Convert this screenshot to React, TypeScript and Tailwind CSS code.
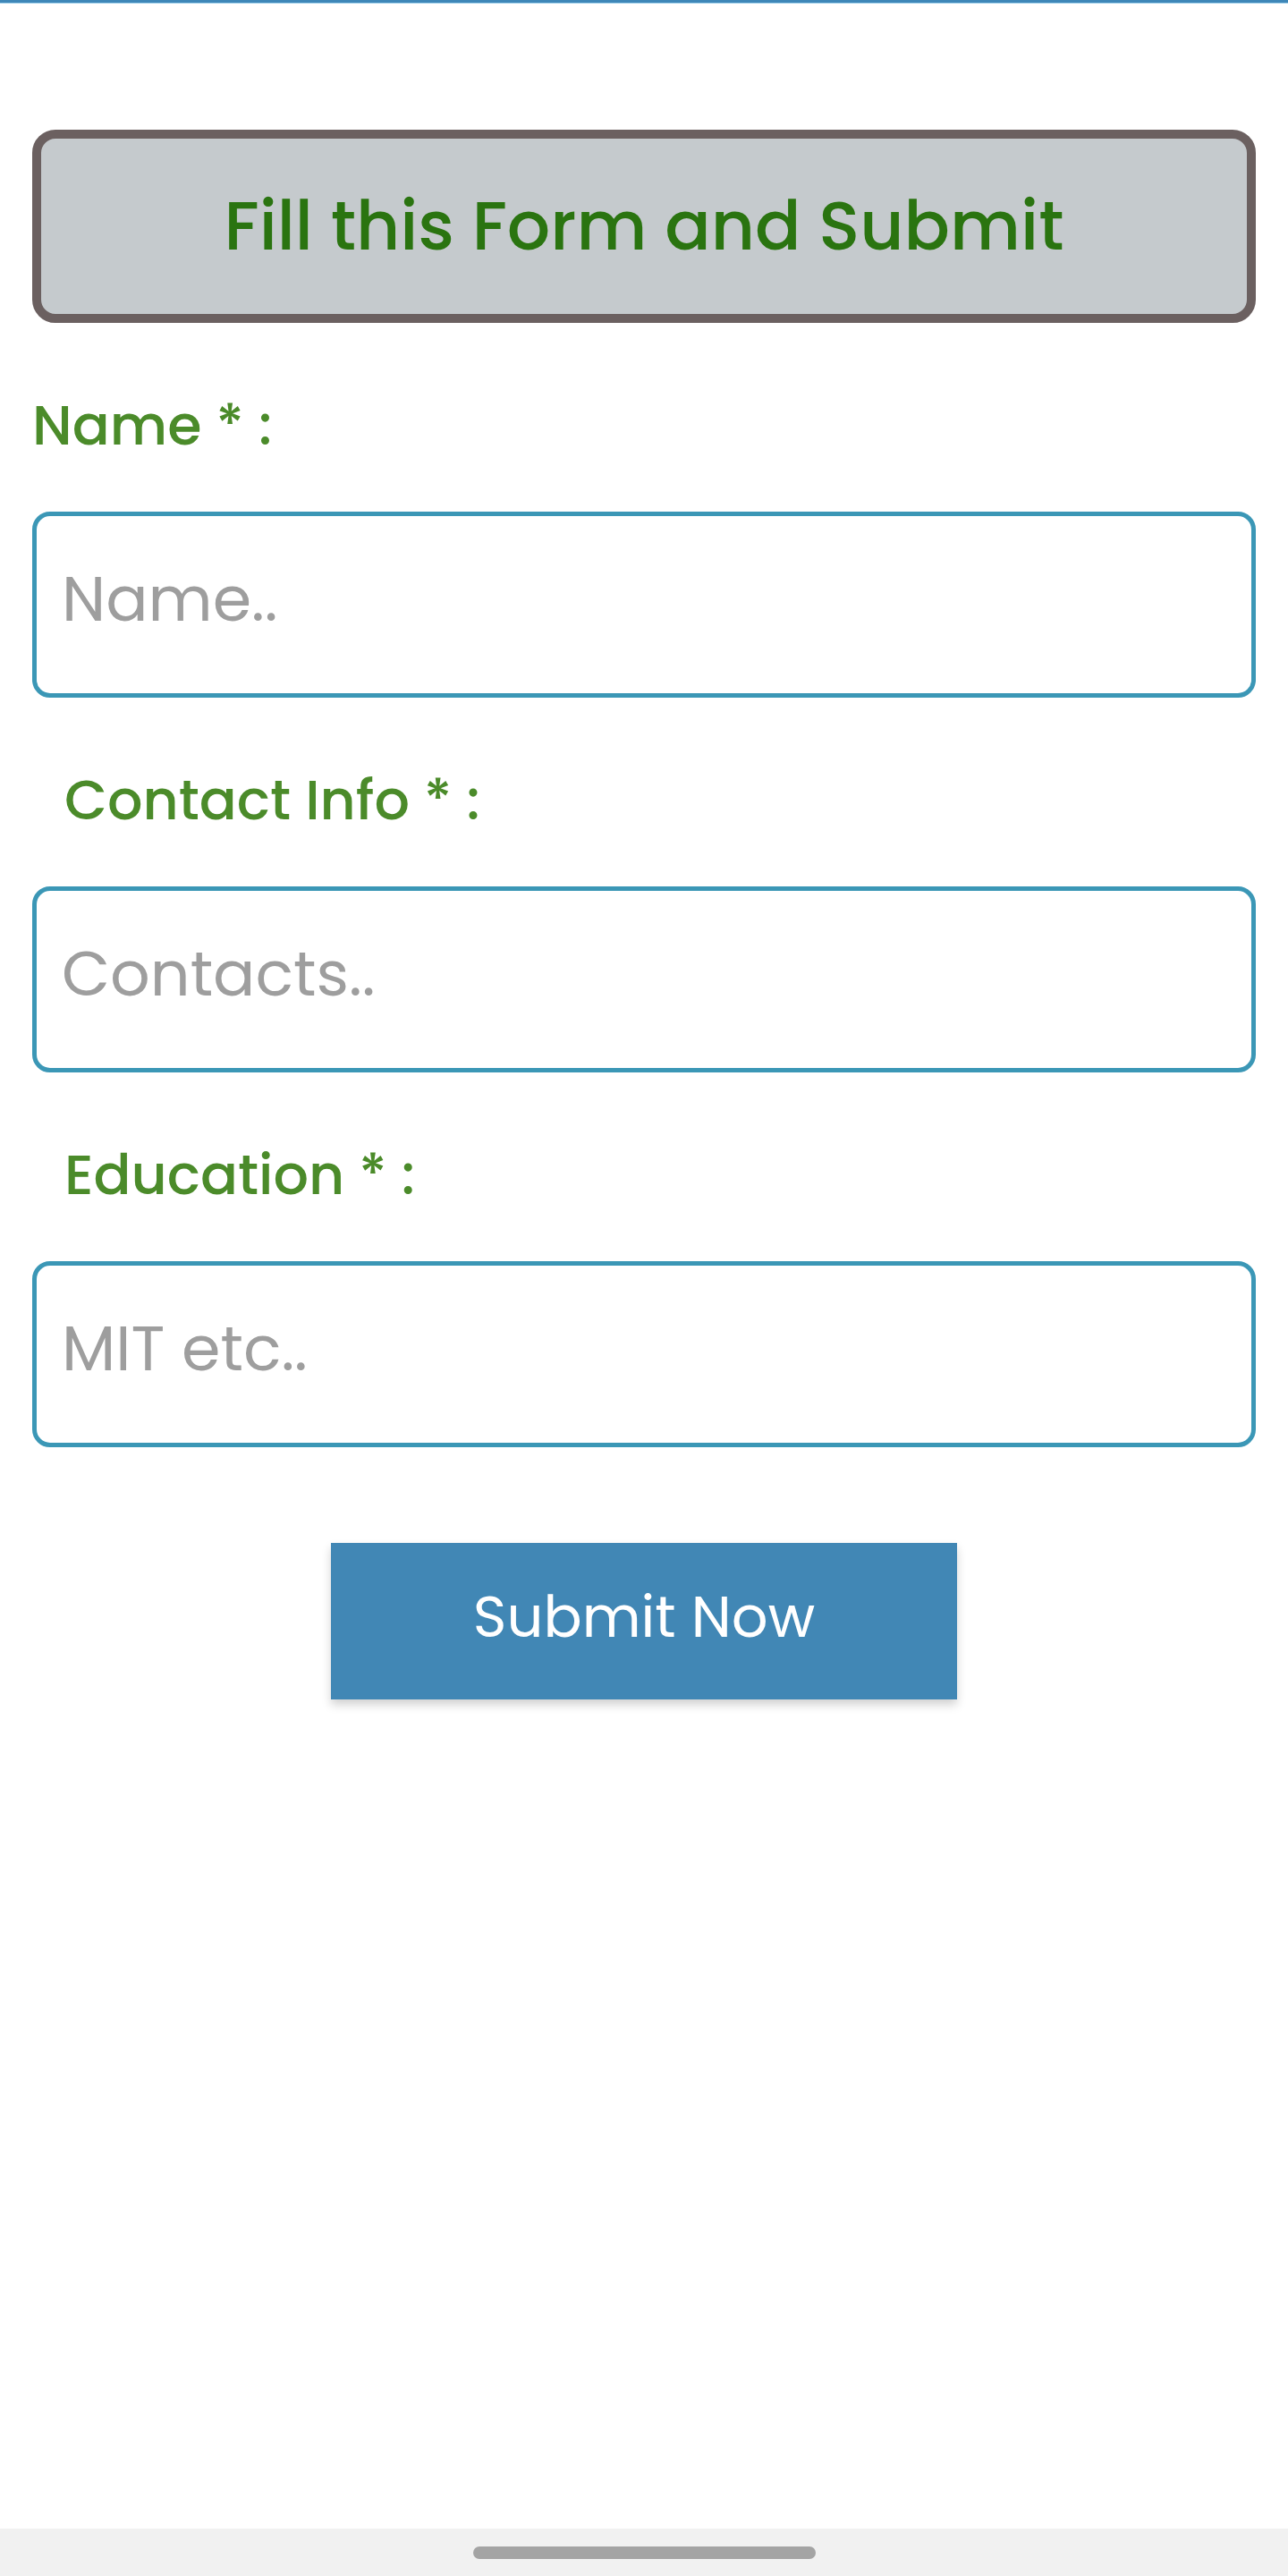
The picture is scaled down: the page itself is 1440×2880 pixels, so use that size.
// App.tsx
const fields = [
  { label: "Name * :", placeholder: "Name..", indent: false },
  { label: "Contact Info * :", placeholder: "Contacts..", indent: true },
  { label: "Education * :", placeholder: "MIT etc..", indent: true },
];

export default function App() {
  return (
    <div className="min-h-[2880px] flex flex-col bg-white font-['Poppins','Inter',sans-serif]">
      {/* top accent line */}
      <div className="h-[4px] bg-[#3e87b8] border-b border-[#9fd0ea]" />

      <main className="px-9 flex flex-col">
        {/* heading box */}
        <div className="mt-[141px] h-[216px] rounded-[26px] border-[10px] border-[#6b6060] bg-[#c5cacd] flex items-center justify-center">
          <h1 className="text-[76px] font-medium leading-none text-[#2a7410]">
            Fill this Form and Submit
          </h1>
        </div>

        {/* form fields */}
        <form className="flex flex-col" onSubmit={(e) => e.preventDefault()}>
          {fields.map((f, i) => (
            <div key={i} className="flex flex-col mt-[84px]">
              <label
                className={`text-[62px] font-medium leading-none text-[#4b8b2a] ${
                  f.indent ? "pl-9" : "pl-0"
                }`}
              >
                {f.label}
              </label>
              <input
                type="text"
                placeholder={f.placeholder}
                className="mt-[65px] h-[208px] w-full rounded-[20px] border-[5px] border-[#3b97b6] bg-white pl-[28px] pb-[12px] text-[70px] text-gray-700 outline-none placeholder:text-[#9e9e9e]"
              />
            </div>
          ))}

          <div className="flex justify-center mt-[107px]">
            <button
              type="submit"
              className="w-[700px] h-[175px] bg-[#4187b5] text-white text-[64px] pb-[10px] shadow-[0_6px_10px_rgba(0,0,0,0.18)]"
            >
              Submit Now
            </button>
          </div>
        </form>
      </main>

      {/* bottom gesture bar */}
      <div className="mt-auto h-[53px] bg-[#f1f1f1] flex justify-center pt-[20px]">
        <div className="w-[383px] h-[14px] rounded-full bg-[#a4a4a4]" />
      </div>
    </div>
  );
}
